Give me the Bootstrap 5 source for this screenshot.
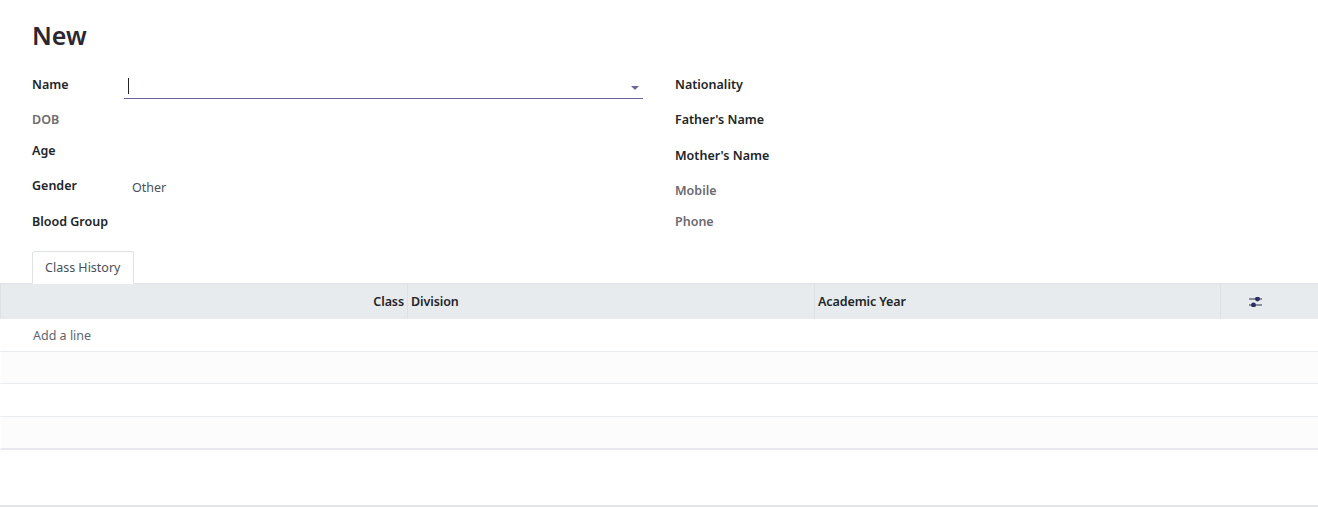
<!DOCTYPE html>
<html lang="en">
<head>
<meta charset="utf-8">
<title>New</title>
<link href="https://cdn.jsdelivr.net/npm/bootstrap@5.3.0/dist/css/bootstrap.min.css" rel="stylesheet">
<style>
html,body{height:507px;overflow:hidden;background:#fff}
body{font-family:"Noto Sans","Open Sans",sans-serif;font-size:12.5px;color:#374151;line-height:19.5px}
.sheet-top{padding:16px 32px 0}
.rec-title{font-size:25px;font-weight:600;color:#2b2630;line-height:39px;margin:0 0 20px}
.fields{column-gap:32px}
.field-col{width:611px}
.field-row{align-items:flex-start}
.fld-label{width:92px;flex:none;font-weight:600;color:#212529;white-space:nowrap}
.fld-muted{color:#6d6a70}
.h-name{height:35px}.h-dob{height:31px}.h-age{height:35px}.h-gender{height:36px}.h-blood{height:30px}
.h-nat{height:35px}.h-fat{height:36px}.h-mot{height:35px}.h-mob{height:31px}.h-pho{height:30px}
.name-input{flex:1;height:30px;border-bottom:1px solid #71639e;position:relative;margin-top:-6px;padding-left:4px}
.caret-bar{display:block;width:1px;height:16px;background:#212529;margin-top:9px}
.name-caret{position:absolute;right:4px;top:17px;width:0;height:0;border-left:4px solid transparent;border-right:4px solid transparent;border-top:4px solid #71639e}
.fld-value{padding:2px 0 0 8px;color:#4b5058}
.tab-strip{padding-left:32px;margin-top:9px;height:32px;position:relative;z-index:1}
.tab-item{display:block;width:102px;height:33px;border:1px solid #dee2e6;border-bottom-color:#fff;border-radius:3px 3px 0 0;background:#fff;padding:6px 0 0 12px;color:#495057}
.lines{width:100%;table-layout:fixed;border-collapse:separate;border-spacing:0;margin:0}
.lines th{height:36px;background:#e8ebee;border-top:1px solid #dee2e6;font-weight:600;color:#212529;padding:0 3px;border-right:1px solid #dee2e6;vertical-align:middle;letter-spacing:-.1px}
.lines th:first-child{border-left:1px solid #dee2e6}
.lines th:last-child{border-right:0;text-align:center;padding-right:30px}
.lines td{height:33px;padding:1px 32px 0;border-left:1px solid #fff;border-bottom:1px solid #e9ecef;color:#5f6570}
.lines tr.stripe td{background:#fcfcfc}
.lines tr.stripe:not(.lastrow) td{height:32px}
.lines tr.lastrow td{height:33px;border-bottom:2px solid #e7e9ed}
.list-foot{height:57px;border-bottom:2px solid #e3e5e8}
</style>
</head>
<body>
<div class="sheet-top">
  <h1 class="rec-title">New</h1>
  <div class="d-flex fields">
    <div class="field-col">
      <div class="d-flex field-row h-name"><div class="fld-label">Name</div><div class="name-input"><span class="caret-bar"></span><span class="name-caret"></span></div></div>
      <div class="d-flex field-row h-dob"><div class="fld-label fld-muted">DOB</div></div>
      <div class="d-flex field-row h-age"><div class="fld-label">Age</div></div>
      <div class="d-flex field-row h-gender"><div class="fld-label">Gender</div><div class="fld-value">Other</div></div>
      <div class="d-flex field-row h-blood"><div class="fld-label">Blood Group</div></div>
    </div>
    <div class="field-col">
      <div class="d-flex field-row h-nat"><div class="fld-label">Nationality</div></div>
      <div class="d-flex field-row h-fat"><div class="fld-label">Father's Name</div></div>
      <div class="d-flex field-row h-mot"><div class="fld-label">Mother's Name</div></div>
      <div class="d-flex field-row h-mob"><div class="fld-label fld-muted">Mobile</div></div>
      <div class="d-flex field-row h-pho"><div class="fld-label fld-muted">Phone</div></div>
    </div>
  </div>
</div>
<div class="tab-strip"><a class="tab-item text-decoration-none" href="#">Class History</a></div>
<table class="lines">
  <colgroup><col style="width:408px"><col style="width:407px"><col style="width:406px"><col></colgroup>
  <thead><tr>
    <th class="text-end">Class</th><th>Division</th><th>Academic Year</th>
    <th><svg width="14" height="10" viewBox="0 0 14 10" aria-hidden="true"><path d="M0 2h13M0 8h13" stroke="#2c2f5b" stroke-width="1.2"/><circle cx="8.5" cy="2" r="2.4" fill="#2c2f5b"/><circle cx="4.5" cy="8" r="2.4" fill="#2c2f5b"/></svg></th>
  </tr></thead>
  <tbody>
    <tr><td colspan="4">Add a line</td></tr>
    <tr class="stripe"><td colspan="4"></td></tr>
    <tr><td colspan="4"></td></tr>
    <tr class="stripe lastrow"><td colspan="4"></td></tr>
  </tbody>
</table>
<div class="list-foot"></div>
<script src="https://cdn.jsdelivr.net/npm/bootstrap@5.3.0/dist/js/bootstrap.bundle.min.js"></script>
</body>
</html>
